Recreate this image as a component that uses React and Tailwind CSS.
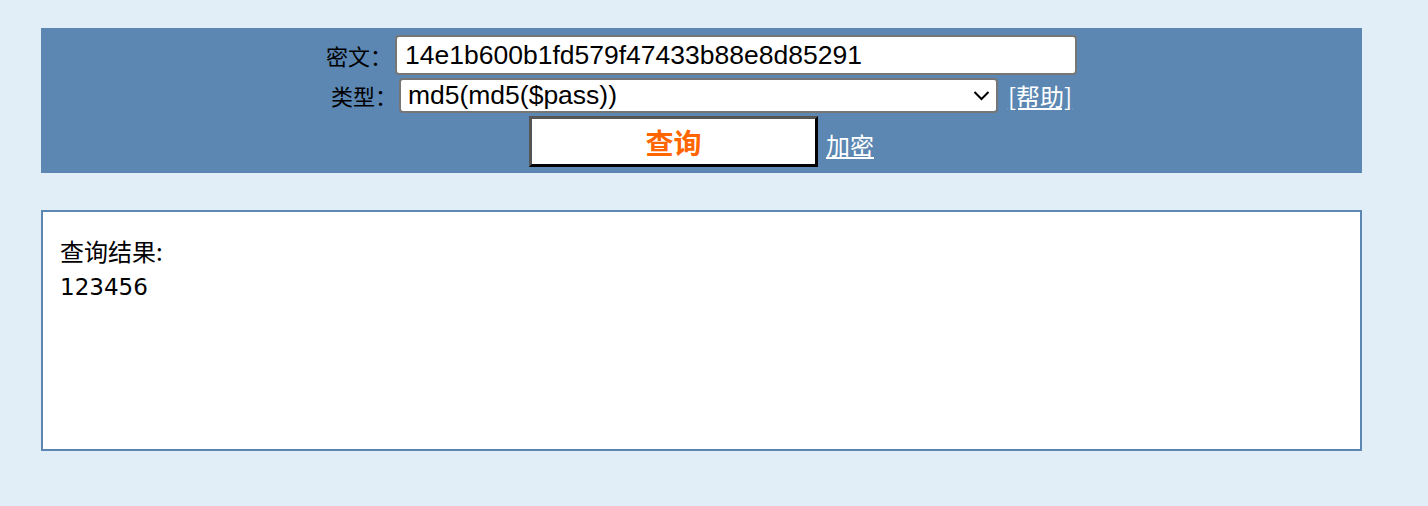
import React, { useState } from 'react';

const cjk = { fontFamily: '"Noto Sans CJK SC", "Liberation Sans", sans-serif' };

const App = () => {
  const [hash, setHash] = useState('14e1b600b1fd579f47433b88e8d85291');
  const [type, setType] = useState('md5(md5($pass))');

  return (
    <div className="min-h-[506px] w-full bg-[#e1eef7] pt-[28px]">
      {/* query form */}
      <div className="ml-[41px] w-[1321px] bg-[#5b87b2] pt-[7px] pb-[6px] flex flex-col gap-[3px]">
        <div className="flex items-center justify-center gap-[3px]">
          <span className="text-[22px] text-black" style={cjk}>密文：</span>
          <input
            value={hash}
            onChange={(e) => setHash(e.target.value)}
            className="w-[682px] h-[40px] px-[8px] bg-white border-2 border-[#767676] rounded-[4px] text-[26.5px] text-black font-['Liberation_Sans',sans-serif] outline-none"
          />
        </div>

        <div className="flex items-center justify-center">
          <span className="text-[22px] text-black mr-[2px]" style={cjk}>类型：</span>
          <div className="relative">
            <select
              value={type}
              onChange={(e) => setType(e.target.value)}
              className="appearance-none w-[599px] h-[35px] pl-[7px] bg-white border-2 border-[#767676] rounded-[4px] text-[26.5px] leading-none text-black font-['Liberation_Sans',sans-serif] outline-none"
            >
              <option>md5</option>
              <option>md5(md5($pass))</option>
              <option>sha1</option>
            </select>
            <svg
              className="absolute right-[8px] top-[12px] pointer-events-none"
              width="17"
              height="11"
              viewBox="0 0 17 11"
            >
              <path d="M1.5 2 L8.5 9 L15.5 2" fill="none" stroke="#000" strokeWidth="2" />
            </svg>
          </div>
          <a href="#" className="ml-[10px] text-[24px] leading-none text-white underline" style={cjk}>
            [帮助]
          </a>
        </div>

        <div className="flex items-center justify-center gap-[8px]">
          <button className="w-[289px] h-[51px] bg-white border-[3px] border-t-[#555555] border-l-[#555555] border-r-black border-b-black text-[28px] font-bold text-[#ff6600]" style={cjk}>
            查询
          </button>
          <a href="#" className="text-[24px] leading-none text-white underline mt-[6px]" style={cjk}>
            加密
          </a>
        </div>
      </div>

      {/* result */}
      <div className="ml-[41px] mt-[37px] w-[1321px] h-[241px] bg-white border-2 border-[#5b87b2] pl-[17px] pt-[20px]">
        <div
          className="text-[23px] leading-[37px] text-black"
          style={{ fontFamily: '"DejaVu Sans", "Noto Sans CJK SC", sans-serif' }}
        >
          <div className="text-[24px]" style={cjk}>查询结果:</div>
          <div>123456</div>
        </div>
      </div>
    </div>
  );
};

export default App;
